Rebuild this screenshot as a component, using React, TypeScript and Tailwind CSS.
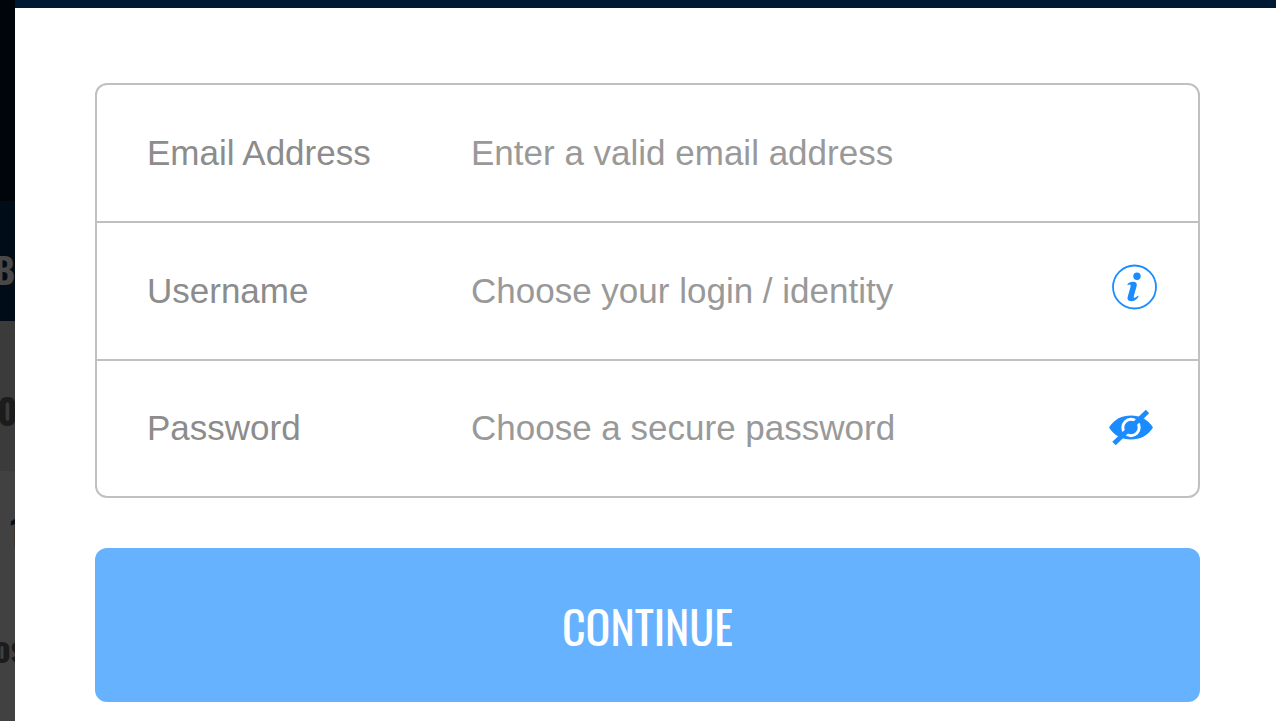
import { useState } from 'react'

interface Field {
  id: string
  label: string
  placeholder: string
  type: string
}

const fields: Field[] = [
  { id: 'email', label: 'Email Address', placeholder: 'Enter a valid email address', type: 'email' },
  { id: 'username', label: 'Username', placeholder: 'Choose your login / identity', type: 'text' },
  { id: 'password', label: 'Password', placeholder: 'Choose a secure password', type: 'password' },
]

function InfoIcon() {
  return (
    <svg viewBox="0 0 46 46" className="size-[46px]" aria-hidden="true">
      <circle cx="22.500" cy="23" r="21.5" fill="none" stroke="#1a8cff" strokeWidth="1.800" />
      <circle cx="25" cy="12.2" r="3.700" fill="#1a8cff" />
      <path
        d="M15.300 20.400C16.500 18.700 18.600 17.800 21 17.800C24.200 17.800 25.400 19.400 24.600 22.300L21.900 31.700C21.400 33.500 22 34.200 23.300 33.600C24.200 33.200 25 32.400 25.700 31.500L26.700 32.200C24.800 35.500 22.200 37.200 19.200 37.200C16.200 37.200 15 35.300 15.800 32.500L18.400 23.200C18.900 21.400 18.600 20.500 17.600 20.500C17 20.500 16.500 20.800 15.900 21.200Z"
        fill="#1a8cff"
      />
    </svg>
  )
}

function EyeOffIcon() {
  return (
    <svg viewBox="0 0 46 36" className="h-9 w-[46px]" aria-hidden="true">
      <path d="M1 18.500C6.500 10 14 6.500 23 6.500S39.500 10 45 18.500C39.500 27 32 30.500 23 30.500S6.500 27 1 18.500Z" fill="#1a8cff" />
      <circle cx="23" cy="18.500" r="8.200" fill="none" stroke="#fff" strokeWidth="3" />
      <path d="M6 34.500 39.500 2.500" stroke="#1a8cff" strokeWidth="4.800" />
    </svg>
  )
}

// Strip of the dimmed page that stays visible beside the dialog
function Backdrop() {
  return (
    <div
      className="flex w-[15px] shrink-0 flex-col overflow-hidden font-['Oswald','Liberation_Sans_Narrow',sans-serif] font-bold"
      aria-hidden="true"
    >
      <div className="h-[201px] bg-[#00040b]"></div>
      <div className="flex h-[120px] items-center justify-end bg-[#000c17] pt-4 text-4xl leading-none text-[#484848]">
        B
      </div>
      <div className="flex h-[150px] items-center justify-center bg-[#3b3b3b] pt-7 text-4xl leading-none text-[#1c1c1c]">
        0
      </div>
      <div className="flex-1 bg-[#414141] pt-[42px] text-[#1c1c1c]">
        <div className="pl-2.5 text-4xl leading-none text-[#00101f]">1</div>
        <div className="flex justify-center pt-20 pl-1 text-4xl leading-none">os</div>
      </div>
    </div>
  )
}

export default function App() {
  const [showPassword, setShowPassword] = useState(false)

  return (
    <div className="flex min-h-screen bg-white font-['Liberation_Sans',Arial,sans-serif]">
      <Backdrop />

      <div className="flex min-w-0 flex-1 flex-col">
        <div className="h-2 bg-[#001a33]"></div>

        <form className="flex flex-col pt-[75px] pr-[76px] pb-4 pl-20" onSubmit={(e) => e.preventDefault()}>
          {/* Fields */}
          <div className="rounded-xl border-2 border-[#c0c0c0]">
            {fields.map((field) => (
              <div
                key={field.id}
                className="flex h-[138px] items-center border-b-2 border-[#c0c0c0] pr-10 pl-[50px] text-[35px] last:h-[135px] last:border-b-0"
              >
                <label htmlFor={field.id} className="w-[324px] shrink-0 text-[#8c8c8c]">
                  {field.label}
                </label>
                <input
                  id={field.id}
                  type={field.type === 'password' && showPassword ? 'text' : field.type}
                  placeholder={field.placeholder}
                  className="min-w-0 flex-1 bg-transparent text-[#555] outline-none placeholder:text-[#999]"
                />
                {field.id === 'username' && (
                  <button type="button" aria-label="Username help" className="mb-2 shrink-0">
                    <InfoIcon />
                  </button>
                )}
                {field.id === 'password' && (
                  <button
                    type="button"
                    aria-label="Show password"
                    className="mr-1 mb-1 shrink-0"
                    onClick={() => setShowPassword(!showPassword)}
                  >
                    <EyeOffIcon />
                  </button>
                )}
              </div>
            ))}
          </div>

          <button
            type="submit"
            className="mt-[50px] h-[154px] rounded-xl bg-[#66b2ff] font-['Oswald','Liberation_Sans_Narrow',sans-serif] text-[46px] text-white"
          >
            CONTINUE
          </button>
        </form>
      </div>
    </div>
  )
}
